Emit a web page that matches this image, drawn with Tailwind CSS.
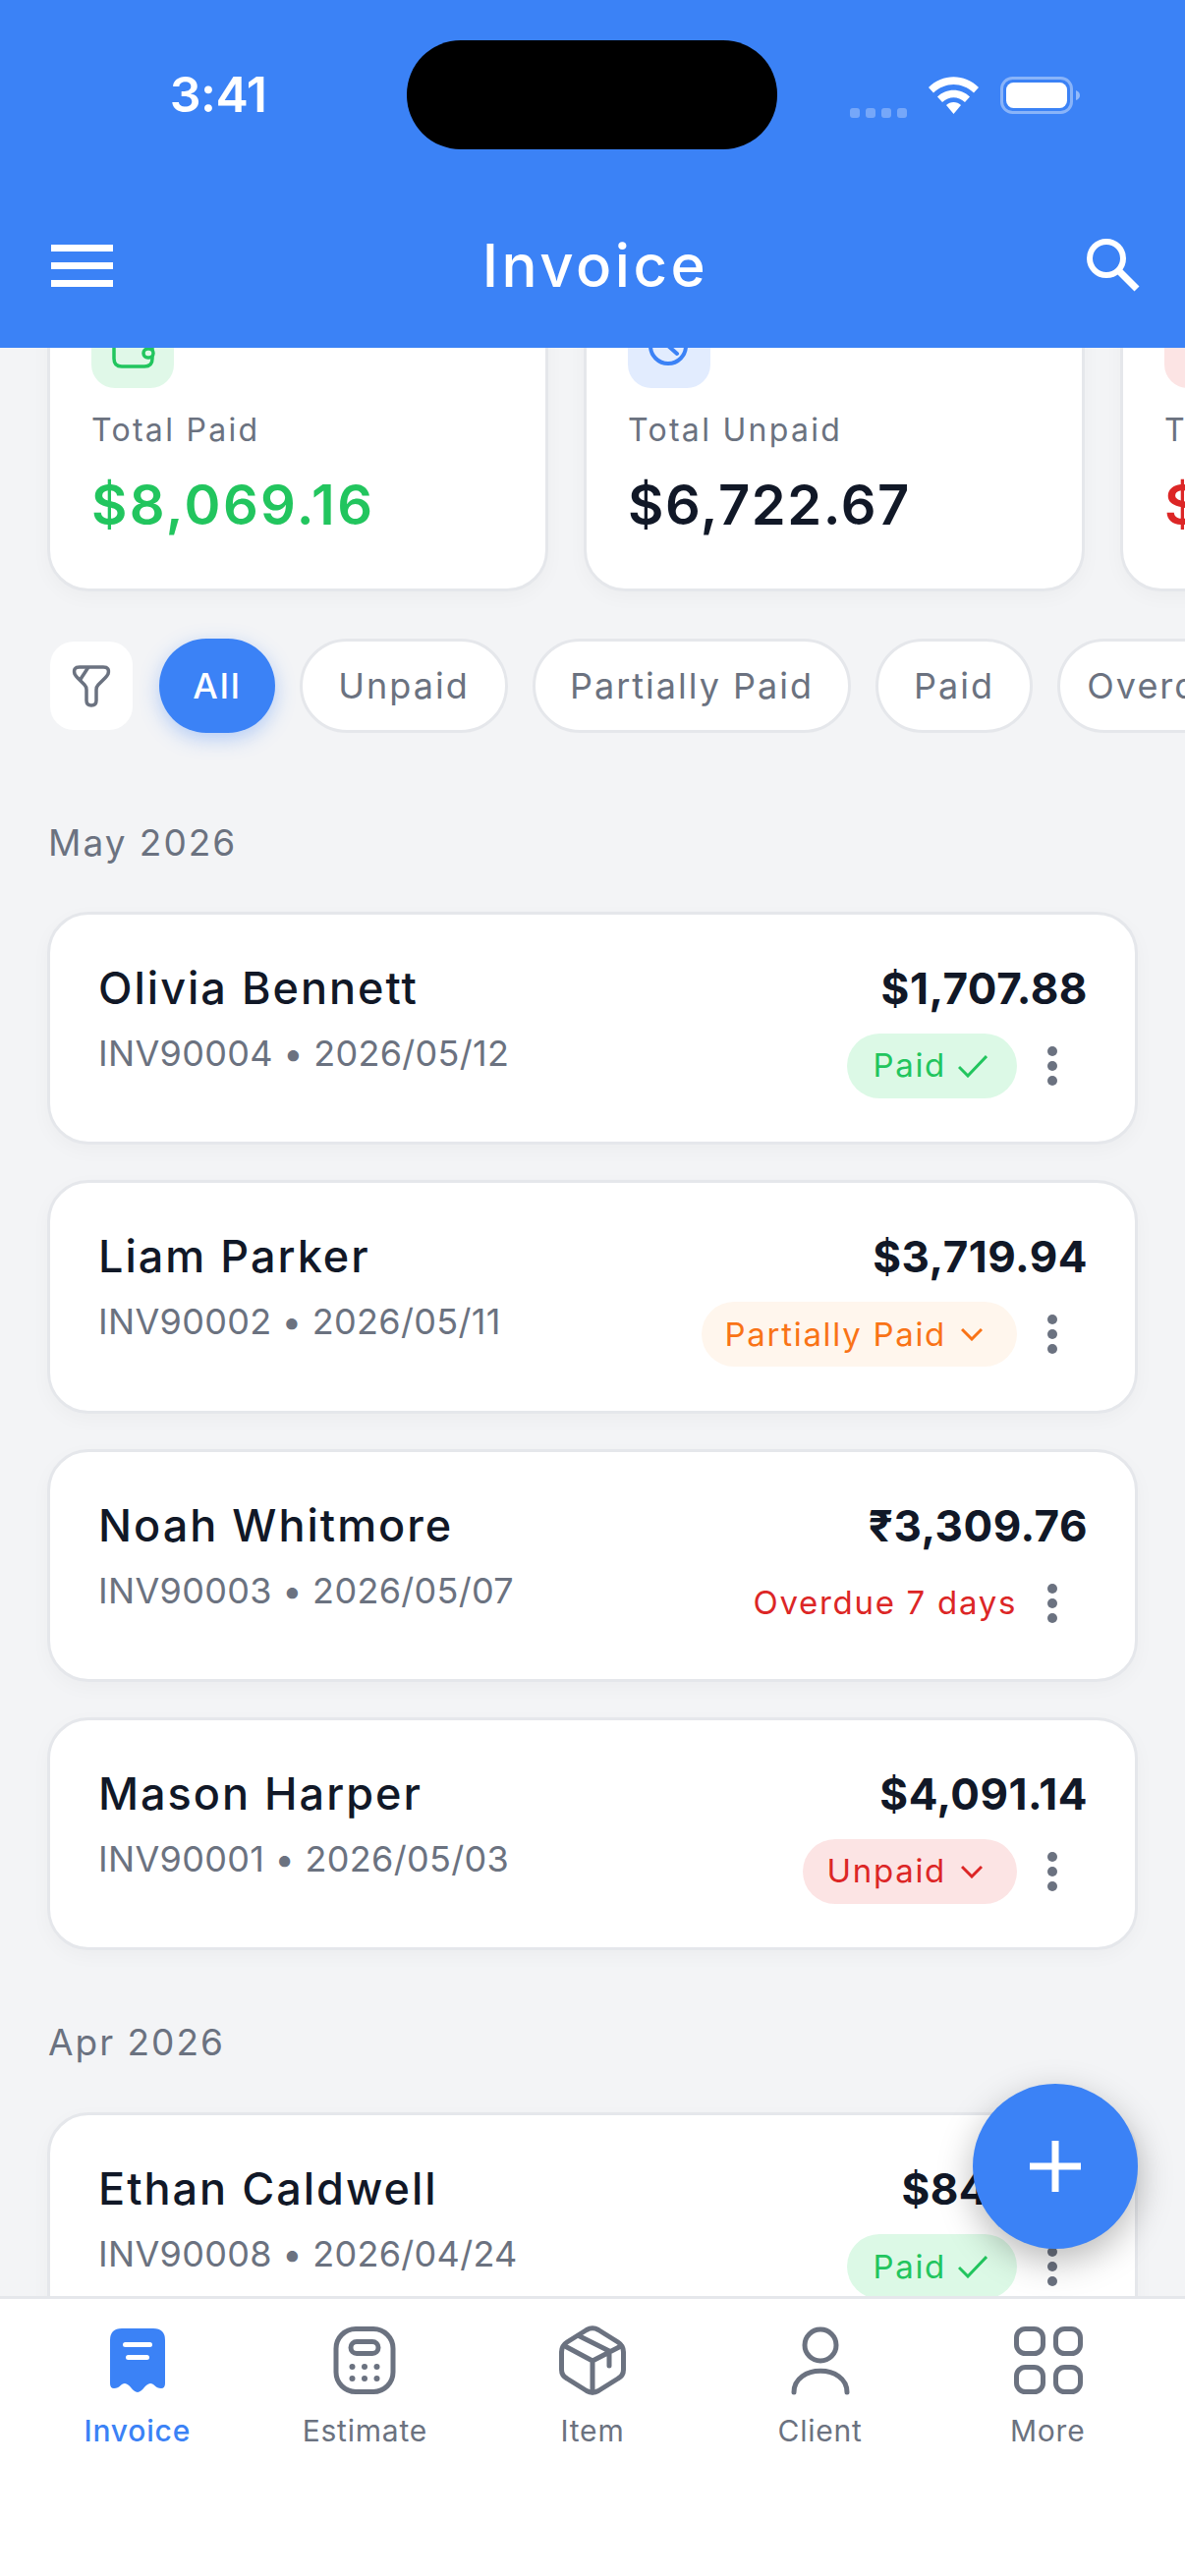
<!DOCTYPE html>
<html lang="en">
<head>
<meta charset="utf-8">
<title>Invoice</title>
<script src="https://cdn.jsdelivr.net/npm/@tailwindcss/browser@4"></script>
</head>
<body class="m-0">
<div class="relative flex h-[2622px] w-[1206px] flex-col overflow-hidden bg-[#f3f4f6] font-[Inter,sans-serif]">
  <header class="relative z-10 h-[354px] shrink-0 bg-[#3b82f6] text-white">
    <div class="flex h-[152px] items-end">
      <div class="flex h-[111px] w-[414px] items-center justify-center pl-[30px] text-[50px] font-semibold tracking-[-0.5px]">3:41</div>
      <div class="h-[111px] w-[377px] rounded-[55px] bg-black"></div>
      <div class="ml-[74px] flex h-[111px] items-center">
        <div class="mt-[36px] flex gap-[6px]">
          <span class="h-[10px] w-[10px] rounded-[3px] bg-white/30"></span><span class="h-[10px] w-[10px] rounded-[3px] bg-white/30"></span><span class="h-[10px] w-[10px] rounded-[3px] bg-white/30"></span><span class="h-[10px] w-[10px] rounded-[3px] bg-white/30"></span>
        </div>
        <svg class="ml-[22px]" width="51" height="38" viewBox="0 0 51 38" fill="#fff"><path d="M0 11C14-3.5 37-3.5 51 11L46 16.5C34 5 17 5 5 16.5Z"/><path d="M9 20.5C18 11.5 33 11.5 42 20.5L37 26C30 19.5 21 19.5 14 26Z"/><path d="M18 29C22 25 29 25 33 29L25.5 38Z"/></svg>
        <svg class="ml-[22px]" width="84" height="38" viewBox="0 0 84 38"><rect x="1.5" y="1.5" width="71" height="35" rx="11" fill="none" stroke="#fff" stroke-opacity=".4" stroke-width="3"/><rect x="6" y="6" width="62" height="26" rx="7.5" fill="#fff"/><path d="M77 14Q81 15.500 81 19T77 24Z" fill="#fff" fill-opacity=".45"/></svg>
      </div>
    </div>
    <div class="mt-[88px] grid h-[60px] grid-cols-[1fr_auto_1fr] items-center pl-[52px] pr-[46px]">
      <div class="flex w-[63px] flex-col gap-[11px]"><span class="h-[7px] bg-white"></span><span class="h-[7px] bg-white"></span><span class="h-[7px] bg-white"></span></div>
      <div class="text-[60px] font-medium leading-[60px] tracking-[3.5px]">Invoice</div>
      <svg class="justify-self-end" width="54" height="54" viewBox="0 0 54 54" fill="none" stroke="#fff"><circle cx="20" cy="20" r="17" stroke-width="6"/><path d="M32 32L51 51" stroke-width="7"/></svg>
    </div>
  </header>

  <main class="min-h-0 flex-1 overflow-hidden">
    <div class="-mt-[85px]">
      <section class="ml-[48px] flex gap-[36px]">
        <div class="h-[333px] w-[510px] shrink-0 rounded-[42px] border-[3px] border-[#e5e7eb] bg-white pl-[42px] pt-[39px] shadow-[0_6px_20px_rgba(0,0,0,0.03)]">
          <div class="h-[84px] w-[84px] rounded-[24px] bg-[#e0f8e8]"><svg width="84" height="84" viewBox="0 0 84 84" fill="none" stroke="#22c55e" stroke-width="3.500"><path d="M31 20H55Q62 20 62 28V54Q62 62 54 62H31Q23 62 23 54V28Q23 20 31 20Z"/><rect x="53" y="44" width="10" height="9" rx="4.500" fill="#e0f8e8"/></svg></div>
          <div class="mt-[23px] text-[32px] leading-[40px] tracking-[2.3px] text-[#6b7280]">Total Paid</div>
          <div class="mt-[22px] text-[56px] font-semibold leading-[68px] tracking-[2.4px] text-[#22c55e]">$8,069.16</div>
        </div>
        <div class="h-[333px] w-[510px] shrink-0 rounded-[42px] border-[3px] border-[#e5e7eb] bg-white pl-[42px] pt-[39px] shadow-[0_6px_20px_rgba(0,0,0,0.03)]">
          <div class="h-[84px] w-[84px] rounded-[24px] bg-[#e2ecfe]"><svg width="84" height="84" viewBox="0 0 84 84" fill="none" stroke="#3b82f6" stroke-width="4"><circle cx="41" cy="41" r="18"/><path d="M41 41L50 49" stroke-linecap="round"/></svg></div>
          <div class="mt-[23px] text-[32px] leading-[40px] tracking-[2.3px] text-[#6b7280]">Total Unpaid</div>
          <div class="mt-[22px] text-[56px] font-semibold leading-[68px] tracking-[1.6px] text-[#111827]">$6,722.67</div>
        </div>
        <div class="h-[333px] w-[510px] shrink-0 rounded-[42px] border-[3px] border-[#e5e7eb] bg-white pl-[42px] pt-[39px] shadow-[0_6px_20px_rgba(0,0,0,0.03)]">
          <div class="h-[84px] w-[84px] rounded-[24px] bg-[#fce4e4]"></div>
          <div class="mt-[23px] whitespace-nowrap text-[32px] leading-[40px] tracking-[2.3px] text-[#6b7280]">Total Overdue</div>
          <div class="mt-[22px] text-[56px] font-semibold leading-[68px] tracking-[2px] text-[#dc2626]">$3,309.76</div>
        </div>
      </section>

      <section class="ml-[51px] mt-[48px] flex h-[96px] items-center whitespace-nowrap text-[36px] tracking-[2px]">
        <div class="flex h-[90px] w-[84px] shrink-0 items-center justify-center rounded-[24px] bg-white"><svg width="48" height="48" viewBox="0 0 48 48" fill="none" stroke="#6b7280" stroke-width="3.500"><path d="M12 5H36Q43 5 41 12Q40 14 38 16L31 23Q29 25 29 28V39Q29 44 24 44Q19 44 19 39V28Q19 25 17 23L10 16Q8 14 7 12Q5 5 12 5Z"/><path d="M21 5L12.500 18"/></svg></div>
        <div class="ml-[27px] flex h-[96px] w-[118px] shrink-0 items-center justify-center rounded-full bg-[#3b82f6] font-medium text-white shadow-[0_6px_20px_rgba(59,130,246,0.35)]">All</div>
        <div class="ml-[25px] flex h-[96px] w-[212px] shrink-0 items-center justify-center rounded-full border-[3px] border-[#e5e7eb] bg-white text-[#6b7280]">Unpaid</div>
        <div class="ml-[25px] flex h-[96px] w-[324px] shrink-0 items-center justify-center rounded-full border-[3px] border-[#e5e7eb] bg-white text-[#6b7280]">Partially Paid</div>
        <div class="ml-[25px] flex h-[96px] w-[160px] shrink-0 items-center justify-center rounded-full border-[3px] border-[#e5e7eb] bg-white text-[#6b7280]">Paid</div>
        <div class="ml-[25px] flex h-[96px] w-[220px] shrink-0 items-center justify-center rounded-full border-[3px] border-[#e5e7eb] bg-white text-[#6b7280]">Overdue</div>
      </section>

      <h2 class="ml-[49px] mt-[89px] text-[37px] font-normal leading-[46px] tracking-[2px] text-[#6b7280]">May 2026</h2>
      <div class="mx-[48px] mt-[47px] flex flex-col gap-[36px]">

        <article class="flex h-[237.33px] justify-between rounded-[42px] border-[3px] border-[#e5e7eb] bg-white pl-[49px] pr-[50px] pt-[48px] shadow-[0_6px_20px_rgba(0,0,0,0.03)]">
          <div><div class="text-[45px] font-medium leading-[54px] tracking-[2px] text-[#111827]">Olivia Bennett</div><div class="mt-[17px] text-[36px] leading-[44px] tracking-[0.3px] text-[#6b7280]">INV90004 • 2026/05/12</div></div>
          <div class="flex flex-col items-end">
            <div class="-mr-[2px] text-[44px] font-bold leading-[54px] tracking-[0.5px] text-[#111827]">$1,707.88</div>
            <div class="mt-[19px] flex h-[66px] items-center">
              <div class="flex h-[66px] items-center gap-[12px] rounded-full bg-[#dcf9e6] pl-[26px] pr-[30px] text-[33px] tracking-[1.7px] text-[#22c55e]">Paid<svg width="30" height="24" viewBox="0 0 30 24" fill="none" stroke="#22c55e" stroke-width="3"><path d="M1 13L10 22L29 2"/></svg></div>
              <div class="ml-[31px] mr-[29px] flex flex-col gap-[5px]"><span class="h-[10px] w-[10px] rounded-full bg-[#6b7280]"></span><span class="h-[10px] w-[10px] rounded-full bg-[#6b7280]"></span><span class="h-[10px] w-[10px] rounded-full bg-[#6b7280]"></span></div>
            </div>
          </div>
        </article>

        <article class="flex h-[237.33px] justify-between rounded-[42px] border-[3px] border-[#e5e7eb] bg-white pl-[49px] pr-[50px] pt-[48px] shadow-[0_6px_20px_rgba(0,0,0,0.03)]">
          <div><div class="text-[45px] font-medium leading-[54px] tracking-[2px] text-[#111827]">Liam Parker</div><div class="mt-[17px] text-[36px] leading-[44px] tracking-[0.3px] text-[#6b7280]">INV90002 • 2026/05/11</div></div>
          <div class="flex flex-col items-end">
            <div class="-mr-[2px] text-[44px] font-bold leading-[54px] tracking-[0.5px] text-[#111827]">$3,719.94</div>
            <div class="mt-[19px] flex h-[66px] items-center">
              <div class="flex h-[66px] items-center gap-[15px] rounded-full bg-[#fff6ed] pl-[24px] pr-[35px] text-[33px] tracking-[1.7px] text-[#f97316]">Partially Paid<svg width="22" height="14" viewBox="0 0 22 14" fill="none" stroke="#f97316" stroke-width="3"><path d="M1 2L11 12L21 2"/></svg></div>
              <div class="ml-[31px] mr-[29px] flex flex-col gap-[5px]"><span class="h-[10px] w-[10px] rounded-full bg-[#6b7280]"></span><span class="h-[10px] w-[10px] rounded-full bg-[#6b7280]"></span><span class="h-[10px] w-[10px] rounded-full bg-[#6b7280]"></span></div>
            </div>
          </div>
        </article>

        <article class="flex h-[237.33px] justify-between rounded-[42px] border-[3px] border-[#e5e7eb] bg-white pl-[49px] pr-[50px] pt-[48px] shadow-[0_6px_20px_rgba(0,0,0,0.03)]">
          <div><div class="text-[45px] font-medium leading-[54px] tracking-[2px] text-[#111827]">Noah Whitmore</div><div class="mt-[17px] text-[36px] leading-[44px] tracking-[0.3px] text-[#6b7280]">INV90003 • 2026/05/07</div></div>
          <div class="flex flex-col items-end">
            <div class="-mr-[2px] text-[44px] font-bold leading-[54px] tracking-[0.5px] text-[#111827]">₹3,309.76</div>
            <div class="mt-[19px] flex h-[66px] items-center">
              <div class="text-[33px] tracking-[1.7px] text-[#dc2626]">Overdue 7 days</div>
              <div class="ml-[31px] mr-[29px] flex flex-col gap-[5px]"><span class="h-[10px] w-[10px] rounded-full bg-[#6b7280]"></span><span class="h-[10px] w-[10px] rounded-full bg-[#6b7280]"></span><span class="h-[10px] w-[10px] rounded-full bg-[#6b7280]"></span></div>
            </div>
          </div>
        </article>

        <article class="flex h-[237.33px] justify-between rounded-[42px] border-[3px] border-[#e5e7eb] bg-white pl-[49px] pr-[50px] pt-[48px] shadow-[0_6px_20px_rgba(0,0,0,0.03)]">
          <div><div class="text-[45px] font-medium leading-[54px] tracking-[2px] text-[#111827]">Mason Harper</div><div class="mt-[17px] text-[36px] leading-[44px] tracking-[0.3px] text-[#6b7280]">INV90001 • 2026/05/03</div></div>
          <div class="flex flex-col items-end">
            <div class="-mr-[2px] text-[44px] font-bold leading-[54px] tracking-[0.5px] text-[#111827]">$4,091.14</div>
            <div class="mt-[19px] flex h-[66px] items-center">
              <div class="flex h-[66px] items-center gap-[15px] rounded-full bg-[#fce4e4] pl-[24px] pr-[35px] text-[33px] tracking-[1.7px] text-[#dc2626]">Unpaid<svg width="22" height="14" viewBox="0 0 22 14" fill="none" stroke="#dc2626" stroke-width="3"><path d="M1 2L11 12L21 2"/></svg></div>
              <div class="ml-[31px] mr-[29px] flex flex-col gap-[5px]"><span class="h-[10px] w-[10px] rounded-full bg-[#6b7280]"></span><span class="h-[10px] w-[10px] rounded-full bg-[#6b7280]"></span><span class="h-[10px] w-[10px] rounded-full bg-[#6b7280]"></span></div>
            </div>
          </div>
        </article>
      </div>

      <h2 class="ml-[49px] mt-[71px] text-[37px] font-normal leading-[46px] tracking-[2px] text-[#6b7280]">Apr 2026</h2>
      <div class="mx-[48px] mt-[48px]">
        <article class="flex h-[237.33px] justify-between rounded-[42px] border-[3px] border-[#e5e7eb] bg-white pl-[49px] pr-[50px] pt-[48px] shadow-[0_6px_20px_rgba(0,0,0,0.03)]">
          <div><div class="text-[45px] font-medium leading-[54px] tracking-[2px] text-[#111827]">Ethan Caldwell</div><div class="mt-[17px] text-[36px] leading-[44px] tracking-[0.3px] text-[#6b7280]">INV90008 • 2026/04/24</div></div>
          <div class="flex flex-col items-end">
            <div class="-mr-[2px] text-[44px] font-bold leading-[54px] tracking-[0.5px] text-[#111827]">$845.30</div>
            <div class="mt-[19px] flex h-[66px] items-center">
              <div class="flex h-[66px] items-center gap-[12px] rounded-full bg-[#dcf9e6] pl-[26px] pr-[30px] text-[33px] tracking-[1.7px] text-[#22c55e]">Paid<svg width="30" height="24" viewBox="0 0 30 24" fill="none" stroke="#22c55e" stroke-width="3"><path d="M1 13L10 22L29 2"/></svg></div>
              <div class="ml-[31px] mr-[29px] flex flex-col gap-[5px]"><span class="h-[10px] w-[10px] rounded-full bg-[#6b7280]"></span><span class="h-[10px] w-[10px] rounded-full bg-[#6b7280]"></span><span class="h-[10px] w-[10px] rounded-full bg-[#6b7280]"></span></div>
            </div>
          </div>
        </article>
      </div>
    </div>
  </main>

  <button class="absolute left-[990px] top-[2121px] z-20 flex h-[168px] w-[168px] items-center justify-center rounded-full bg-[#3b82f6] shadow-[0_12px_36px_rgba(0,0,0,0.28)]">
    <svg width="52" height="52" viewBox="0 0 52 52" fill="#fff"><rect x="22.500" width="7" height="52"/><rect y="22.500" width="52" height="7"/></svg>
  </button>

  <nav class="relative z-10 grid h-[285px] shrink-0 grid-cols-5 border-t-[3px] border-[#e5e7eb] bg-white px-[24px] pt-[27px] text-[30px] leading-[38px] tracking-[0.8px] text-[#6b7280]">
    <div class="flex flex-col items-center font-medium text-[#3b82f6]">
      <svg width="72" height="72" viewBox="0 0 72 72"><path fill="#3b82f6" d="M20 3H52Q64 3 64 15V59Q64 64 60 64C54 64 53 59 49 59C44 59 41 68 36 68C31 68 28 59 23 59C19 59 18 64 12 64Q8 64 8 59V15Q8 3 20 3Z"/><rect x="21" y="17" width="30" height="5" rx="2.500" fill="#fff"/><rect x="24" y="30" width="24" height="5" rx="2.500" fill="#fff"/></svg>
      <span class="mt-[16px]">Invoice</span>
    </div>
    <div class="flex flex-col items-center">
      <svg width="72" height="72" viewBox="0 0 72 72" fill="none" stroke="#6b7280" stroke-width="5"><rect x="7" y="3.500" width="58" height="64" rx="20"/><rect x="22" y="16.500" width="28" height="12" rx="6"/><g fill="#6b7280" stroke="none"><circle cx="23.500" cy="42" r="3"/><circle cx="36" cy="42" r="3"/><circle cx="48.500" cy="42" r="3"/><circle cx="23.500" cy="54" r="3"/><circle cx="36" cy="54" r="3"/><circle cx="48.500" cy="54" r="3"/></g></svg>
      <span class="mt-[16px]">Estimate</span>
    </div>
    <div class="flex flex-col items-center">
      <svg width="72" height="72" viewBox="0 0 72 72" fill="none" stroke="#6b7280" stroke-width="5" stroke-linecap="round" stroke-linejoin="round"><path d="M30 4.500Q36 1 42 4.500L62 17Q67.500 20.500 67.500 27V45Q67.500 51 62 54L42 66.500Q36 70 30 66.500L10 54Q4.500 51 4.500 45V27Q4.500 20.500 10 17Z"/><path d="M8 21L36 36L65 21M36 36V68M23 11L53 26V41"/></svg>
      <span class="mt-[16px]">Item</span>
    </div>
    <div class="flex flex-col items-center">
      <svg width="72" height="72" viewBox="0 0 72 72" fill="none" stroke="#6b7280" stroke-width="5" stroke-linecap="round"><circle cx="36" cy="20" r="16"/><path d="M9 68C9 39 63 39 63 68"/></svg>
      <span class="mt-[16px]">Client</span>
    </div>
    <div class="flex flex-col items-center">
      <svg width="72" height="72" viewBox="0 0 72 72" fill="none" stroke="#6b7280" stroke-width="5"><rect x="4.500" y="3.500" width="27" height="25" rx="9"/><rect x="44.500" y="3.500" width="25" height="25" rx="9"/><rect x="4.500" y="42.500" width="27" height="25" rx="9"/><rect x="44.500" y="42.500" width="25" height="25" rx="9"/></svg>
      <span class="mt-[16px]">More</span>
    </div>
  </nav>
</div>
</body>
</html>
